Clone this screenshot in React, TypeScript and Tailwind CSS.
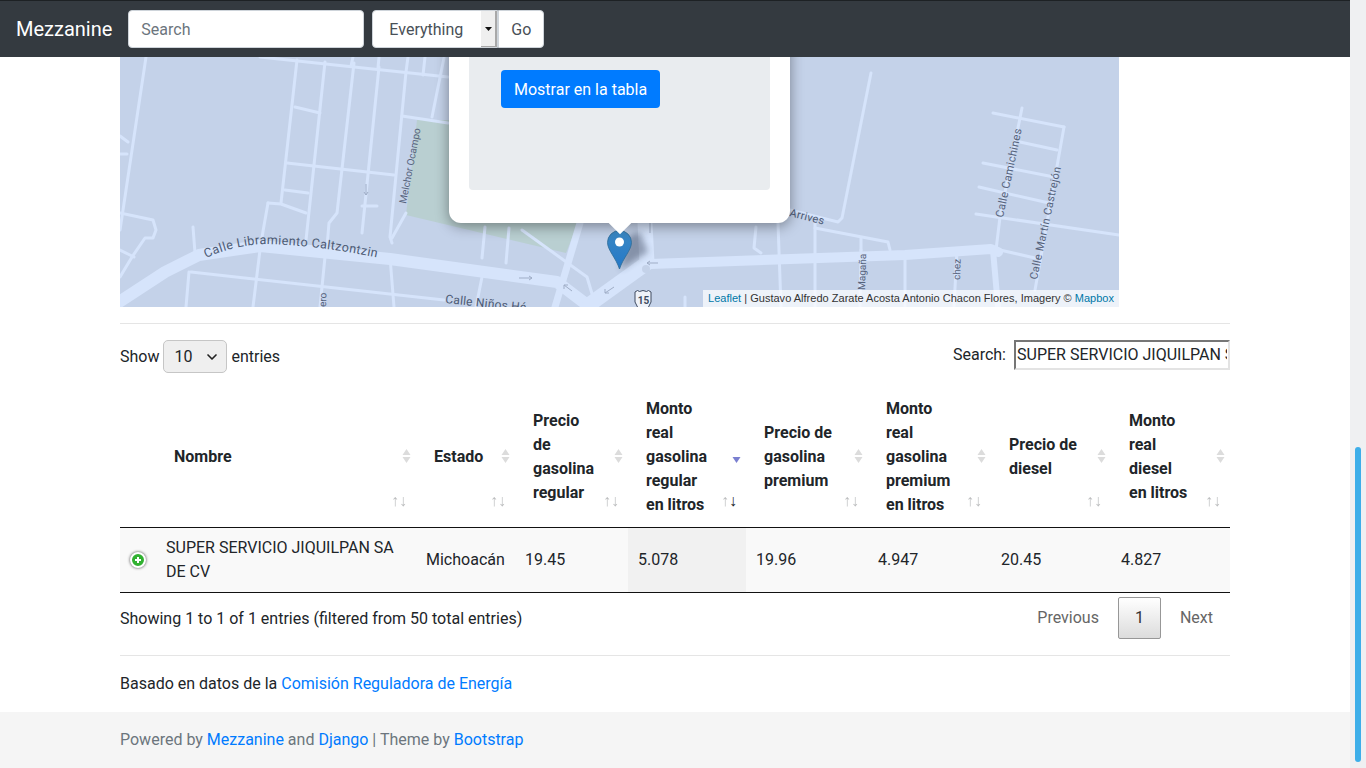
import React from 'react';
import { ChevronDown } from 'lucide-react';

const thinRoads = [
  '146,57 120,230',
  '260,57 448,77',
  '297,60 281,203',
  '325,62 306,240',
  '354,63 337,213 329,223 327,247',
  '379,67 362,233',
  '406,72 390,237 392,243',
  '444,58 432,117',
  '353,57 351,66',
  '379,57 378,68',
  '408,57 406,72',
  '425,57 423,75',
  '295,107 320,113',
  '402,116 448,123',
  '287,163 394,175',
  '285,190 308,193',
  '268,203 281,204 306,213',
  '268,203 262,237',
  '362,206 377,206',
  '406,213 392,238',
  '120,213 153,220 156,230 153,238 145,238 132,257 120,277',
  '120,136 128,142',
  '120,154 127,154',
  '120,250 134,257',
  '193,227 195,253',
  '191,272 444,300',
  '260,250 253,307',
  '325,257 320,307',
  '390,257 394,307',
  '189,272 186,307',
  '482,277 476,307',
  '485,227 482,258',
  '509,228 506,263',
  '522,230 587,277 593,297',
  '871,73 842,218 838,222 790,210',
  '993,113 1064,127',
  '1022,108 1000,217 996,250',
  '1064,127 1035,290',
  '1020,142 1057,150',
  '983,163 1054,177',
  '979,187 1049,203',
  '976,214 1119,235',
  '1000,250 1035,258',
  '815,223 815,307',
  '815,228 888,242 890,250',
  '861,238 861,250',
  '756,227 754,248 761,253',
  '778,223 781,307',
  '905,253 905,307',
  '957,250 954,307',
  '685,297 685,307',
  '861,250 860,307',
];

const MapDrawing = () => (
  <svg viewBox="120 57 999 250" className="block h-[250px] w-[999px]" style={{ fontFamily: 'Roboto, sans-serif' }}>
    <defs>
      <linearGradient id="pin" x1="0" y1="0" x2="0" y2="1">
        <stop offset="0" stopColor="#3b88c3" />
        <stop offset="1" stopColor="#2478c8" />
      </linearGradient>
      <filter id="soft" x="-50%" y="-50%" width="200%" height="200%">
        <feGaussianBlur stdDeviation="3" />
      </filter>
      <path id="libramiento" d="M206 258 Q 232 246 262 244 Q 320 245 384 259" />
      <path id="ninos" d="M445 303 L 530 312" />
    </defs>
    <rect x="120" y="57" width="999" height="250" fill="#c4d2e9" />
    <polygon points="417,120 450,120 578,223 566,253 406,215" fill="#b9cfd1" />
    <g fill="none" stroke="#d6e4fb" strokeLinecap="round" strokeLinejoin="round">
      <g strokeWidth="3">
        {thinRoads.map((points) => (
          <polyline key={points} points={points} />
        ))}
      </g>
      <polyline points="580,223 555,307" strokeWidth="7" />
      <polyline points="993,250 998,307" strokeWidth="6" />
      <polyline points="116,304 165,272 199,255 260,246 390,259 557,282 590,307" strokeWidth="12" />
      <polyline points="645,223 647,263 590,304" strokeWidth="15" />
      <polyline points="650,264 905,255 991,249 998,252" strokeWidth="10" />
    </g>
    <circle cx="646" cy="269" r="4" fill="#c4d2e9" />
    <g fill="none" stroke="#9fadc6" strokeWidth="1">
      <path d="M519 278h13m-3 -2l3 2l-3 2" />
      <path d="M572 291l-8 -6m0 4v-4h4" />
      <path d="M658 263h-11m3 -2l-3 2l3 2" />
      <path d="M614 287l-9 6m4 0h-4v-4" />
      <path d="M650 233v-10" />
      <path d="M366 184v11m-2 -3l2 3l2 -3" />
    </g>
    <g fill="#4c5a74" fontSize="12.5">
      <text letterSpacing="0.4">
        <textPath href="#libramiento">Calle Libramiento Caltzontzin</textPath>
      </text>
      <text letterSpacing="0.2" fontSize="12">
        <textPath href="#ninos">Calle Niños Hé</textPath>
      </text>
      <text x="789" y="216" fontSize="11" letterSpacing="0.2" transform="rotate(14 789 216)">Arrives</text>
    </g>
    <g fill="#56637c" fontSize="11">
      <text x="406" y="204" fontSize="10" transform="rotate(-79 406 204)">Melchor Ocampo</text>
      <text x="1003" y="218" fontSize="11.2" transform="rotate(-78 1003 218)" letterSpacing="0.3">Calle Camichines</text>
      <text x="1037" y="280" transform="rotate(-78 1037 280)" letterSpacing="0.3">Calle Martín Castrejón</text>
      <text x="865" y="290" fontSize="10" transform="rotate(-88 865 290)">Magaña</text>
      <text x="960" y="280" fontSize="10" transform="rotate(-88 960 280)">chez</text>
      <text x="326" y="307" fontSize="10" transform="rotate(-88 326 307)">ero</text>
    </g>
    <path d="M635 292l2.5 -1.5l2 1l3.5 -1l3.5 1l2 -1l2.5 1.5v10l-3 6h-10l-3 -6z" fill="#eef2f9" stroke="#3f4b60" strokeWidth="1" />
    <text x="643.5" y="304" textAnchor="middle" fontSize="10" fontWeight="700" fill="#3f4b60">15</text>
    <polygon points="620,270 648,252 640,232 628,236" fill="#25314a" opacity="0.4" filter="url(#soft)" />
    <path d="M619.5 269 C616 258 607.5 250 607.5 242.5 A12 12 0 0 1 631.5 242.5 C631.5 250 623 258 619.5 269Z" fill="url(#pin)" stroke="#2e6c97" strokeWidth="0.8" />
    <circle cx="619.5" cy="242" r="4.5" fill="#fff" />
  </svg>
);

const SortMark = ({ active }: { active?: boolean }) => (
  <span className="pointer-events-none absolute top-1/2 right-[5px] mt-[1px] -translate-y-1/2">
    {active ? (
      <svg width="9" height="16" viewBox="0 0 9 16" className="block">
        <polygon points="0.5,9 8.5,9 4.5,15" fill="#7a7fd0" />
      </svg>
    ) : (
      <svg width="9" height="16" viewBox="0 0 9 16" className="block">
        <polygon points="4.5,1 8.5,7 0.5,7" fill="#dcdcdc" />
        <polygon points="0.5,9 8.5,9 4.5,15" fill="#dcdcdc" />
      </svg>
    )}
  </span>
);

const columns = [
  { label: 'Nombre', width: 'w-[260px]' },
  { label: 'Estado', width: 'w-[99px]' },
  { label: 'Precio de gasolina regular', width: 'w-[113px]' },
  { label: 'Monto real gasolina regular en litros', width: 'w-[118px]', active: true },
  { label: 'Precio de gasolina premium', width: 'w-[122px]' },
  { label: 'Monto real gasolina premium en litros', width: 'w-[123px]' },
  { label: 'Precio de diesel', width: 'w-[120px]' },
  { label: 'Monto real diesel en\u00a0litros', width: 'w-[119px]' },
];

const cellClass = 'px-[10px] py-2 align-middle';

export default function App() {
  return (
    <div className="flex h-[768px] w-full overflow-hidden bg-white text-[16px] leading-6 text-[#212529] font-['Roboto',sans-serif]">
      <div className="flex min-w-0 flex-1 flex-col">
        <nav className="z-10 flex h-[57px] shrink-0 items-center border-t border-[#1d2124] bg-[#343a40] pl-4">
          <a className="mr-4 text-[20px] leading-[30px] text-white">Mezzanine</a>
          <input
            placeholder="Search"
            className="h-[38px] w-[236px] rounded border border-[#ced4da] bg-white px-3 text-[#495057] outline-none placeholder:text-[#6c757d]"
          />
          <div className="ml-2 flex h-[38px] w-[126px] items-center rounded-l border border-[#ced4da] bg-white pl-4 text-[#495057]">
            <span className="flex-1 pt-[1px]">Everything</span>
            <span className="flex h-full w-4 items-center justify-center border-r-2 border-b border-[#a8a8a8] bg-[#efefef]">
              <svg width="7" height="4" viewBox="0 0 7 4" className="block">
                <polygon points="0,0 7,0 3.5,4" fill="#111" />
              </svg>
            </span>
          </div>
          <button className="h-[38px] w-[46px] rounded-r border border-[#ced4da] bg-white pt-[2px] text-[#495057]">Go</button>
        </nav>

        <main className="flex flex-1 flex-col">
          <div className="flex flex-col px-[120px]">
            <div className="relative h-[250px] w-[999px] overflow-hidden">
              <MapDrawing />
              <div className="absolute top-[-40px] left-[329px] flex h-[206px] w-[341px] flex-col rounded-b-xl bg-white px-5 pb-[33px] shadow-[0_3px_14px_rgba(0,0,0,0.4)]">
                <div className="flex-1 rounded bg-[#e9ecef] pt-[53px] pl-8">
                  <button className="h-[38px] rounded bg-[#007bff] px-[13px] pt-[2px] text-white">Mostrar en la tabla</button>
                </div>
                <div className="absolute top-[198px] left-[163px] h-4 w-4 rotate-45 bg-white" />
              </div>
              <div className="absolute right-0 bottom-0 bg-white/70 px-[5px] text-[11px] leading-[17px] tracking-[0.015px] text-[#333] font-['Liberation_Sans',sans-serif]">
                <a className="text-[#0078a8]">Leaflet</a> | Gustavo Alfredo Zarate Acosta Antonio Chacon Flores, Imagery ©{' '}
                <a className="text-[#0078a8]">Mapbox</a>
              </div>
            </div>

            <hr className="mt-4 border-t border-[#e5e5e5]" />

            <div className="mt-4 flex items-start justify-between">
              <label className="flex h-[33px] items-center gap-1">
                Show
                <span className="relative block">
                  <select
                    defaultValue="10"
                    className="block h-[33px] w-16 appearance-none rounded-[5px] border border-[#c6c6c6] bg-[#efefef] pl-[10px]"
                  >
                    <option value="10">10</option>
                    <option value="25">25</option>
                  </select>
                  <ChevronDown size={16} strokeWidth={2.5} className="pointer-events-none absolute top-[9px] right-[7px] text-[#222]" />
                </span>
                entries
              </label>
              <label className="flex h-[30px] items-center gap-2">
                Search:
                <input
                  readOnly
                  defaultValue="SUPER SERVICIO JIQUILPAN SA DE CV"
                  className="h-[30px] w-[216px] border-2 border-t-[#767676] border-r-[#e3e3e3] border-b-[#e3e3e3] border-l-[#767676] px-px pb-[2px] outline-none"
                />
              </label>
            </div>

            <table className="mt-[10px] w-full table-fixed border-collapse">
              <colgroup>
                <col className="w-[36px]" />
                {columns.map((col) => (
                  <col key={col.label} className={col.width} />
                ))}
              </colgroup>
              <thead>
                <tr className="border-b border-[#111]">
                  <th />
                  {columns.map((col) => (
                    <th key={col.label} className="relative pt-[14px] pr-[30px] pb-[10px] pl-[18px] text-left align-middle font-bold">
                      {col.label}
                      <SortMark active={col.active} />
                      <span className="absolute right-[9px] bottom-[18px] flex text-[16px] leading-none font-normal">
                        <span className="opacity-30">↑</span>
                        <span className={col.active ? '' : 'opacity-30'}>↓</span>
                      </span>
                    </th>
                  ))}
                </tr>
              </thead>
              <tbody>
                <tr className="border-b border-[#111] bg-[#f9f9f9]">
                  <td className={cellClass}>
                    <span className="flex h-4 w-4 items-center justify-center rounded-full border-2 border-white bg-[#31b131] shadow-[0_0_3px_#444]">
                      <svg width="8" height="8" viewBox="0 0 8 8" className="block">
                        <path d="M4 1v6M1 4h6" stroke="#fff" strokeWidth="2" />
                      </svg>
                    </span>
                  </td>
                  <td className={cellClass}>SUPER SERVICIO JIQUILPAN SA DE CV</td>
                  <td className={cellClass}>Michoacán</td>
                  <td className={cellClass}>19.45</td>
                  <td className={`${cellClass} bg-[#f1f1f1]`}>5.078</td>
                  <td className={cellClass}>19.96</td>
                  <td className={cellClass}>4.947</td>
                  <td className={cellClass}>20.45</td>
                  <td className={cellClass}>4.827</td>
                </tr>
              </tbody>
            </table>

            <div className="mt-1 flex items-center justify-between">
              <span className="pt-[2px]">Showing 1 to 1 of 1 entries (filtered from 50 total entries)</span>
              <div className="flex items-center gap-[2px] text-[#666]">
                <a className="border border-transparent px-4 py-2">Previous</a>
                <a className="rounded-[2px] border border-[#979797] bg-gradient-to-b from-white to-[#dcdcdc] px-4 py-2 text-[#333]">1</a>
                <a className="border border-transparent px-4 py-2">Next</a>
              </div>
            </div>

            <hr className="mt-4 border-t border-[#e5e5e5]" />

            <p className="mt-4">
              Basado en datos de la <a className="text-[#007bff]">Comisión Reguladora de Energía</a>
            </p>
          </div>

          <footer className="mt-4 flex flex-1 items-center bg-[#f5f5f5] px-[120px] text-[#6c757d]">
            <p>
              Powered by <a className="text-[#007bff]">Mezzanine</a> and <a className="text-[#007bff]">Django</a> | Theme by{' '}
              <a className="text-[#007bff]">Bootstrap</a>
            </p>
          </footer>
        </main>
      </div>

      <div className="flex w-4 shrink-0 flex-col items-center bg-[#eff0f2] pt-[447px] pb-[6px]">
        <div className="w-[6px] flex-1 rounded-[3px] bg-[#3daee9]" />
      </div>
    </div>
  );
}
